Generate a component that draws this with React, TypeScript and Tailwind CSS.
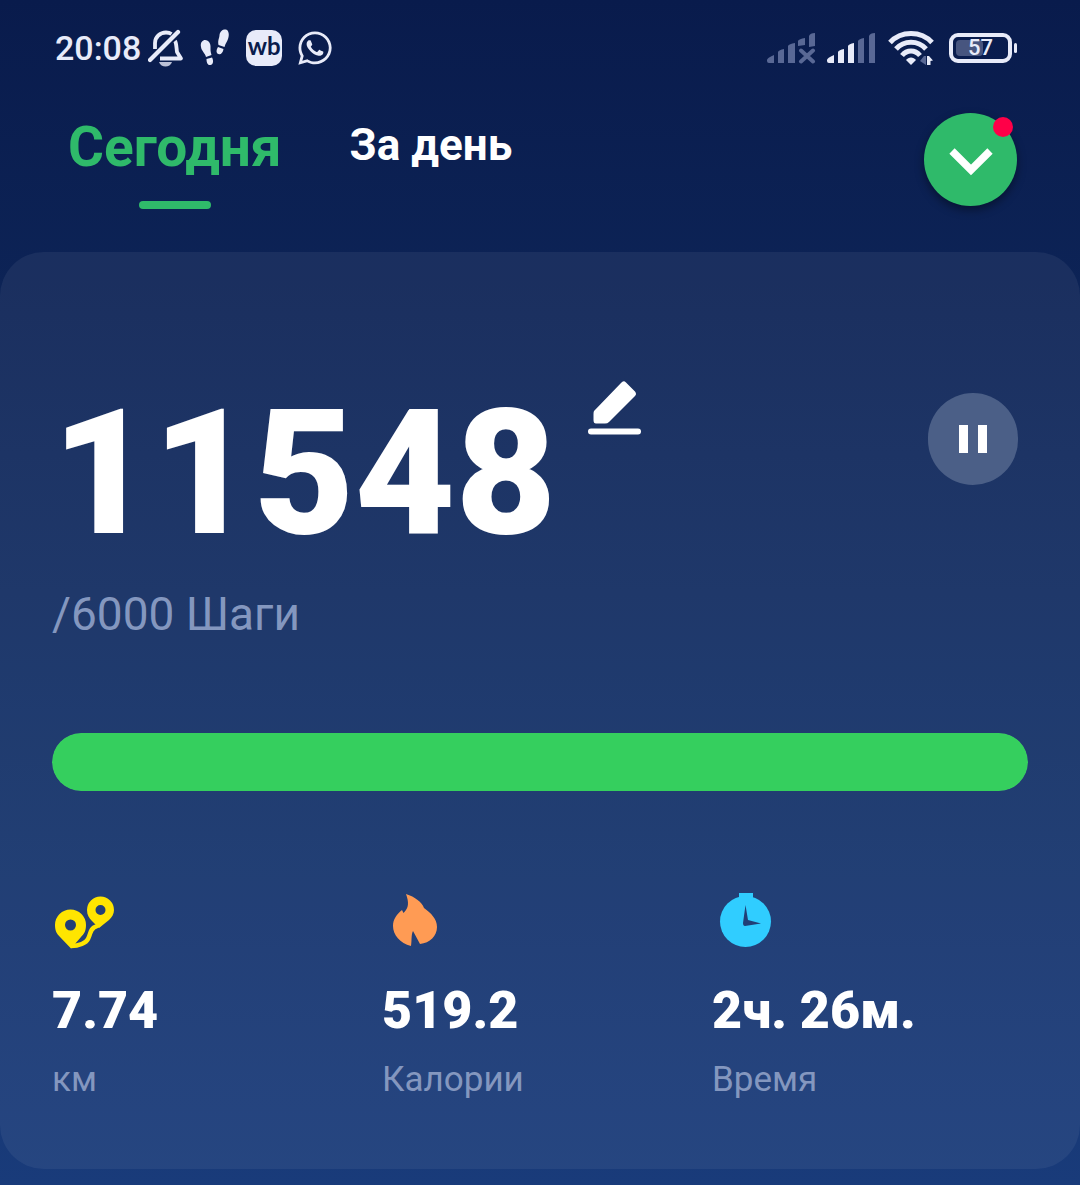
import { memo, type ReactNode } from "react";
import { FaWhatsapp } from "react-icons/fa";

const steps = { count: 11548, goal: 6000 };

function MutedBellIcon() {
  return (
    <svg viewBox="0 0 36 38" className="h-[38px] w-9" fill="none" aria-hidden="true">
      <path
        d="M7 20V14C7 8 12 3.500 18 3.500C20 3.500 22 4 23.500 5M27 12C28.500 14 28.500 20 29 23L33 29.500H12"
        stroke="currentColor"
        strokeWidth="3.800"
        strokeLinejoin="round"
      />
      <path d="M2 31L30 3" stroke="currentColor" strokeWidth="4.200" strokeLinecap="round" />
      <path d="M11 33H24C22 39 13 39 11 33Z" fill="currentColor" opacity="0.8" />
    </svg>
  );
}

function FootstepsIcon() {
  return (
    <svg viewBox="0 0 30 38" className="h-[38px] w-[30px]" fill="currentColor" aria-hidden="true">
      <path d="M1 18C0 13 3 11 5 11C9 11 11 15 10.500 19C10.300 22 11 24 11.500 26L6 28C5 24 1.500 22 1 18Z" />
      <path d="M6.500 30L12 28.500C14 32 13 36 10.500 36C8 36.500 6.500 34 6.500 30Z" />
      <path d="M18.500 16C17.500 11 19.500 9 19.500 6C20 2 23 0 26 .5C29 1.500 29.500 6 28 10C27 13 25.500 14 24.500 18Z" />
      <path d="M18 18L23.500 20C23 24 20.500 26 18.500 25C16 24.500 16 21 18 18Z" />
    </svg>
  );
}

function NoSignalIcon() {
  return (
    <svg viewBox="0 0 49 32" className="h-8 w-[49px] text-[#596895]" fill="currentColor" aria-hidden="true">
      <path d="M0 28Q0 26 7 23V31H2Q0 31 0 29ZM11 20Q12 18 17 17V31H11ZM21 14Q22 12 28 11V31H21ZM31 9Q32 7 38 6V13L31 14ZM42 4Q43 1 48 1V14L42 15Z" />
      <path d="M34 18.500L46 29.500M46 18.500L34 29.500" stroke="currentColor" strokeWidth="4" strokeLinecap="round" />
    </svg>
  );
}

function SignalIcon() {
  return (
    <svg viewBox="0 0 49 32" className="h-8 w-[49px]" fill="currentColor" aria-hidden="true">
      <path d="M0 28Q0 26 7 23V31H2Q0 31 0 29ZM11 20Q12 18 17 17V31H11ZM21 14Q22 12 27 11V31H21Z" />
      <path d="M31 9Q32 7 37 6V31H31ZM42 4Q43 1 48 1V31H42Z" className="text-[#596895]" />
    </svg>
  );
}

function WifiIcon() {
  return (
    <svg viewBox="0 0 46 36" className="h-9 w-[46px]" fill="none" aria-hidden="true">
      <path
        d="M2 12.500C13 .5 33 .5 44 12.500M8 19C16 10 30 10 38 19M14 25.500C19 19.500 27 19.500 32 25.500"
        stroke="currentColor"
        strokeWidth="5"
      />
      <path d="M18 30C20.500 26.500 25.500 26.500 28 30L23 35Z" fill="currentColor" />
      <path d="M38 26V35L32 31L36 26Z" fill="#596895" />
      <path d="M39 35V26H41L45 30.500L42.500 31V35Z" fill="currentColor" />
    </svg>
  );
}

function Battery({ level }: { level: number }) {
  return (
    <div className="flex items-center gap-0.5">
      <div className="relative flex h-[30px] w-[63px] items-center justify-center rounded-[9px] border-4 border-[#e8ebf9] p-[3px]">
        <span
          className="absolute inset-y-[3px] left-[3px] rounded-sm bg-[#47557f]"
          style={{ width: `${level * 0.86}%` }}
        />
        <span className="relative text-[22px] leading-6 font-medium">{level}</span>
      </div>
      <span className="h-2.5 w-[3px] rounded-sm bg-[#e8ebf9]" />
    </div>
  );
}

function StatusBar() {
  return (
    <div className="flex h-24 items-center justify-between pr-[63px] pl-[55px] text-[#e8ebf9]">
      <div className="flex items-center">
        <time className="mr-[7px] text-[34px] leading-10 font-medium">20:08</time>
        <MutedBellIcon />
        <span className="mr-4 ml-4">
          <FootstepsIcon />
        </span>
        <span className="mr-3.5 flex size-9 items-center justify-center rounded-[10px] bg-[#e8ebf9] pb-1 font-['Lato'] text-[24px] leading-8 font-bold text-[#0a1c4c]">
          wb
        </span>
        <FaWhatsapp className="size-[38px]" aria-hidden="true" />
      </div>
      <div className="flex items-center">
        <NoSignalIcon />
        <span className="mr-3 ml-[11px]">
          <SignalIcon />
        </span>
        <WifiIcon />
        <span className="ml-[15px]">
          <Battery level={57} />
        </span>
      </div>
    </div>
  );
}

function Header() {
  return (
    <header className="flex h-[156px] items-start justify-between pr-[63px] pl-[68px]">
      <nav className="flex items-start gap-[68px] pt-[18px]">
        <button
          type="button"
          aria-current="page"
          className="flex flex-col items-center gap-[21px] text-[55px] leading-[66px] font-bold text-[#2fba6a]"
        >
          Сегодня
          <span className="h-2 w-[72px] rounded-full bg-[#2fba6a]" />
        </button>
        <button type="button" className="text-[44px] leading-[62px] font-bold text-white">
          За день
        </button>
      </nav>
      <button
        type="button"
        aria-label="Меню"
        className="relative mt-[17px] flex size-[93px] items-center justify-center rounded-full bg-[#2fba6a] shadow-[0_4px_10px_rgba(0,0,0,0.4)]"
      >
        <svg viewBox="0 0 44 28" className="mt-1 h-7 w-11" fill="none" aria-hidden="true">
          <path d="M3 3L22 22L41 3" stroke="white" strokeWidth="7.500" />
        </svg>
        <span className="absolute top-1 right-1 size-5 rounded-full bg-[#ff0048]" />
      </button>
    </header>
  );
}

function RouteIcon() {
  return (
    <svg viewBox="0 0 64 56" className="h-14 w-16" aria-hidden="true">
      <path
        d="M19 53C27 53 34 50 36 46C39 40 38 37 42 34.500C45 33 46 33 48 31"
        fill="none"
        stroke="#ffe500"
        strokeWidth="4.500"
      />
      <path
        fill="#ffe500"
        fillRule="evenodd"
        d="M18.500 16.500A15.500 15.500 0 0 0 3 32C3 38 5 41 8 44L19 55.500L29 44C32 41 34 38 34 32A15.500 15.500 0 0 0 18.500 16.500ZM18.500 26.500A5.500 5.500 0 1 1 18.500 37.500A5.500 5.500 0 1 1 18.500 26.500ZM48.500 3.500A13.500 13.500 0 0 0 35 17C35 22 37 25 40 28L47 35L57 27C60 24 62 21 62 17A13.500 13.500 0 0 0 48.500 3.500ZM48.500 12A5 5 0 1 1 48.500 22A5 5 0 1 1 48.500 12Z"
      />
    </svg>
  );
}

function FlameIcon() {
  return (
    <svg viewBox="0 0 64 56" className="h-14 w-16" fill="#ff9b54" aria-hidden="true">
      <path d="M24 1C33 4 40 9 42 15C49 20 55 26 55 34C55 43 48 50 38 51L31 38C29 42 30 47 29 53C18 50 11 42 11 33C11 26 15 21 20 17L21.500 20C27 15 27 9 24 1Z" />
    </svg>
  );
}

function ClockIcon() {
  return (
    <svg viewBox="0 0 64 56" className="h-14 w-16" aria-hidden="true">
      <path d="M27 0H41V6H27Z" fill="#30cdff" />
      <circle cx="33.500" cy="28.500" r="25.500" fill="#30cdff" />
      <path d="M33.500 12L36 27L49 30.500L33 33Q31 33 31 30Z" fill="#213f76" />
    </svg>
  );
}

function Stat({ icon, value, label }: { icon: ReactNode; value: string; label: string }) {
  return (
    <div>
      {icon}
      <p className="mt-8 text-[52px] leading-[60px] font-black whitespace-nowrap text-white">
        {value}
      </p>
      <p className="mt-[17px] text-[35px] leading-[44px] text-[#8497bf]">{label}</p>
    </div>
  );
}

const StepsCard = memo(function StepsCard() {
  const percent = Math.min(100, (steps.count / steps.goal) * 100);

  return (
    <main className="rounded-[44px] bg-white/6 px-[52px] pt-32 pb-[67px]">
      <div className="flex items-start">
        <h1 className="text-[174px] leading-[188px] font-black text-white">{steps.count}</h1>
        <button type="button" aria-label="Изменить" className="ml-8">
          <svg viewBox="0 0 54 56" className="h-14 w-[54px]" fill="white" aria-hidden="true">
            <path d="M6 31L33 3Q35.500 0 38 2.500L47 11.500Q49 14 47 16L21 42Q19.500 43.500 17 43.500H8Q5.500 43.500 5.500 40V34Q5.500 32 6 31Z" />
            <rect y="48.500" width="53" height="6" rx="3" />
          </svg>
        </button>
        <button
          type="button"
          aria-label="Пауза"
          className="mt-[13px] mr-2.5 ml-auto flex h-[92px] w-[90px] items-center justify-center gap-2.5 rounded-full bg-[#4b5f87]"
        >
          <span className="h-7 w-[9px] bg-white" />
          <span className="h-7 w-[9px] bg-white" />
        </button>
      </div>

      <p className="mt-[18px] text-[46px] leading-[56px] text-[#8497bf]">/{steps.goal} Шаги</p>

      <div
        role="progressbar"
        aria-label="Шаги"
        aria-valuenow={percent}
        className="mt-[91px] h-[58px] overflow-hidden rounded-full bg-white/10"
      >
        <div className="h-full rounded-full bg-[#35cf5e]" style={{ width: `${percent}%` }} />
      </div>

      <section className="mt-[102px] grid grid-cols-3 gap-[14px]">
        <Stat icon={<RouteIcon />} value="7.74" label="км" />
        <Stat icon={<FlameIcon />} value="519.2" label="Калории" />
        <Stat icon={<ClockIcon />} value="2ч. 26м." label="Время" />
      </section>
    </main>
  );
});

export default function App() {
  return (
    <div className="min-h-screen bg-linear-to-b from-[#091b4c] via-[#112c61] to-[#193b7a] pb-4 font-['Roboto',sans-serif]">
      <StatusBar />
      <Header />
      <StepsCard />
    </div>
  );
}
